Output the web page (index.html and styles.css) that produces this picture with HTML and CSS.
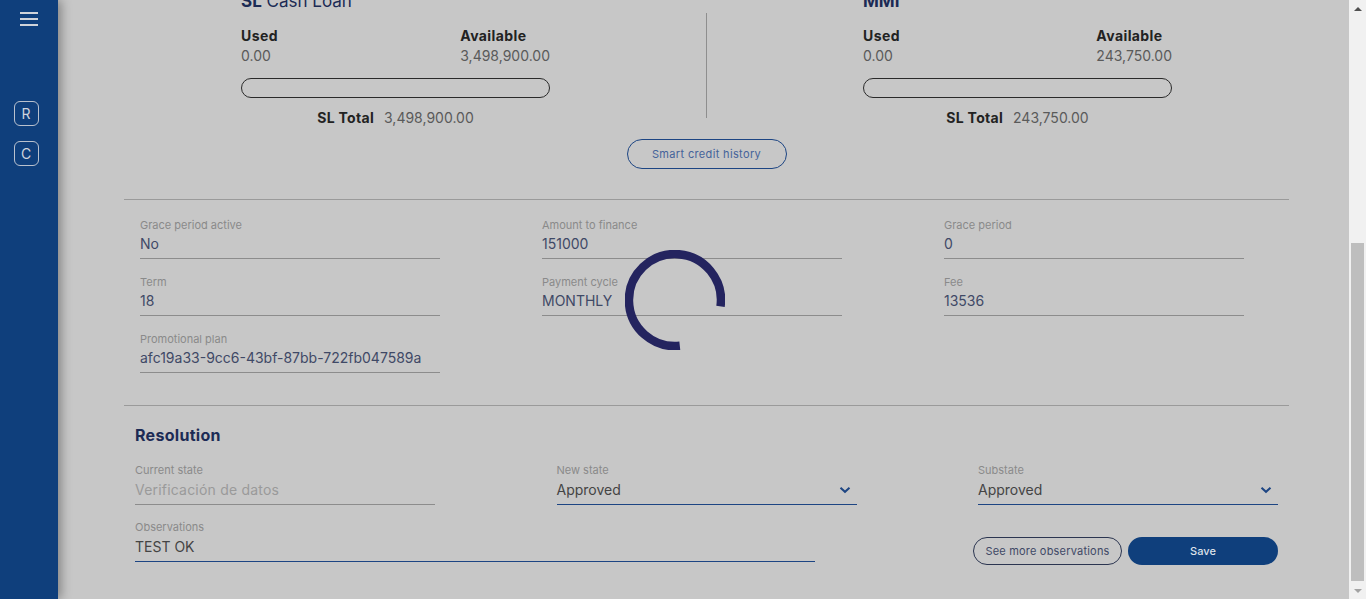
FILE: index.html
```html
<!DOCTYPE html>
<html lang="en">
<head>
<meta charset="utf-8">
<title>Credit request</title>
<link rel="stylesheet" href="styles.css">
</head>
<body>
<div class="app">
  <aside class="sidebar">
    <button class="menu-btn" aria-label="Menu"><span></span><span></span><span></span></button>
    <nav class="side-nav">
      <a class="side-item">R</a>
      <a class="side-item">C</a>
    </nav>
  </aside>
  <main class="scroller">
    <div class="page">
      <section class="summary-top"></section>

      <section class="credit-lines">
        <div class="line-card">
          <h3 class="line-title"><b>SL</b> Cash Loan</h3>
          <div class="line-stats">
            <div class="stat"><span class="stat-label">Used</span><span class="stat-value">0.00</span></div>
            <div class="stat"><span class="stat-label">Available</span><span class="stat-value">3,498,900.00</span></div>
          </div>
          <div class="progress"></div>
          <div class="line-total"><b>SL Total</b><span>3,498,900.00</span></div>
        </div>
        <div class="v-divider"></div>
        <div class="line-card">
          <h3 class="line-title"><b>MMI</b></h3>
          <div class="line-stats">
            <div class="stat"><span class="stat-label">Used</span><span class="stat-value">0.00</span></div>
            <div class="stat"><span class="stat-label">Available</span><span class="stat-value">243,750.00</span></div>
          </div>
          <div class="progress"></div>
          <div class="line-total"><b>SL Total</b><span>243,750.00</span></div>
        </div>
      </section>

      <div class="history-row">
        <button class="btn-outline-blue">Smart credit history</button>
      </div>

      <hr class="rule">

      <section class="fields-grid">
        <div class="field"><span class="field-label">Grace period active</span><span class="field-value">No</span></div>
        <div class="field"><span class="field-label">Amount to finance</span><span class="field-value">151000</span></div>
        <div class="field"><span class="field-label">Grace period</span><span class="field-value">0</span></div>
        <div class="field"><span class="field-label">Term</span><span class="field-value">18</span></div>
        <div class="field"><span class="field-label">Payment cycle</span><span class="field-value">MONTHLY</span></div>
        <div class="field"><span class="field-label">Fee</span><span class="field-value">13536</span></div>
        <div class="field"><span class="field-label">Promotional plan</span><span class="field-value">afc19a33-9cc6-43bf-87bb-722fb047589a</span></div>
      </section>

      <hr class="rule rule-bottom">

      <section class="resolution">
        <h2 class="resolution-title">Resolution</h2>
        <div class="resolution-row">
          <div class="field"><span class="field-label">Current state</span><span class="field-value disabled">Verificación de datos</span></div>
          <div class="field select"><span class="field-label">New state</span><span class="field-value">Approved<svg class="chev" viewBox="0 0 12 8" width="12" height="8"><path d="M1.5 1.8 6 5.8 10.5 1.8" fill="none" stroke="#1d4583" stroke-width="2"/></svg></span></div>
          <div class="field select"><span class="field-label">Substate</span><span class="field-value">Approved<svg class="chev" viewBox="0 0 12 8" width="12" height="8"><path d="M1.5 1.8 6 5.8 10.5 1.8" fill="none" stroke="#1d4583" stroke-width="2"/></svg></span></div>
        </div>
        <div class="resolution-row second">
          <div class="field obs"><span class="field-label">Observations</span><span class="field-value">TEST OK</span></div>
          <div class="actions">
            <button class="btn-outline">See more observations</button>
            <button class="btn-primary">Save</button>
          </div>
        </div>
      </section>
    </div>
  </main>
  <div class="scrollbar" aria-hidden="true">
    <span class="sb-arrow up"></span>
    <div class="sb-track"><span class="sb-thumb"></span></div>
    <span class="sb-arrow down"></span>
  </div>
  <div class="spinner" role="progressbar" aria-label="Loading">
    <svg viewBox="0 0 100 100" width="100" height="100"><path d="M95.5 56.4 A46 46 0 1 0 54.8 95.8" fill="none" stroke="#24245f" stroke-width="8.5"/></svg>
  </div>
</div>
</body>
</html>
```

FILE: styles.css
```css
* { box-sizing: border-box; }
html, body { margin: 0; height: 100%; overflow: hidden; }
body {
  font-family: "Inter", "Open Sans", sans-serif;
  background: #c7c7c7;
  color: #3f4966;
}
.app { display: flex; height: 100%; position: relative; }

.sidebar {
  width: 58px;
  flex: 0 0 58px;
  background: #0f3f7c;
  box-shadow: 3px 0 10px rgba(0,0,0,0.35);
  position: relative;
  z-index: 2;
  display: flex;
  flex-direction: column;
  align-items: center;
}
.menu-btn {
  margin-top: 12px;
  width: 18px;
  height: 14px;
  padding: 0;
  border: 0;
  background: none;
  display: flex;
  flex-direction: column;
  justify-content: space-between;
}
.menu-btn span { display: block; height: 2px; width: 18px; background: #cfd3da; }
.side-nav { margin-top: 75px; display: flex; flex-direction: column; gap: 15px; margin-left: -6px; }
.side-item {
  width: 25px; height: 25px;
  border: 1px solid #b9c1ce;
  border-radius: 6px;
  color: #cfd4dc;
  font-size: 14px;
  display: flex; align-items: center; justify-content: center;
}

.scroller {
  flex: 1;
  height: 100%;
  overflow-y: scroll;
  scrollbar-width: none;
  display: flex;
  flex-direction: column-reverse;
}
.scroller::-webkit-scrollbar { display: none; }

.scrollbar {
  flex: 0 0 17px;
  width: 17px;
  height: 100%;
  background: #f1f1f1;
  display: flex;
  flex-direction: column;
}
.sb-arrow { flex: 0 0 17px; display: flex; align-items: center; justify-content: center; }
.sb-arrow::before { content: ""; width: 0; height: 0; border-left: 4px solid transparent; border-right: 4px solid transparent; }
.sb-arrow.up::before { border-bottom: 4px solid #505050; }
.sb-arrow.down::before { border-top: 4px solid #a3a3a3; }
.sb-track { flex: 1; display: flex; flex-direction: column; justify-content: flex-end; padding: 0 2px 1px; }
.sb-thumb { display: block; height: 338px; background: #bebebe; }

.page { padding: 0 0 34px 66px; margin-right: 60px; }
.summary-top { height: 400px; }

.credit-lines { display: flex; justify-content: center; gap: 156px; }
.line-card { width: 309px; }
.line-title { margin: 0; font-size: 17px; line-height: 20px; font-weight: 400; color: #1c2b55; }
.line-title b { font-weight: 700; }
.line-stats { display: flex; justify-content: space-between; margin-top: 15px; }
.stat { display: flex; flex-direction: column; }
.stat-label { font-size: 14px; line-height: 20px; font-weight: 700; color: #222; letter-spacing: 0.4px; }
.stat-value { font-size: 14px; line-height: 20px; color: #5a5a5a; }
.progress { margin-top: 12px; height: 20px; border: 1px solid #2a2a2a; border-radius: 10px; }
.line-total { margin-top: 10px; text-align: center; font-size: 14px; line-height: 20px; color: #5a5a5a; display: flex; justify-content: center; gap: 10px; }
.line-total b { color: #222; letter-spacing: 0.3px; }
.v-divider { width: 1px; background: #8e8e8e; margin-top: 22px; height: 105px; }

.history-row { display: flex; justify-content: center; margin-top: 11px; }
.btn-outline-blue {
  width: 160px; height: 30px;
  border: 1px solid #1d4583;
  border-radius: 15px;
  background: transparent;
  font: 11px "Inter", sans-serif;
  letter-spacing: 0.35px;
  color: #45639a;
}

.rule { border: 0; border-top: 1px solid #9a9a9a; margin: 30px 0 0; }
.rule-bottom { margin-top: 32px; }

.fields-grid {
  display: grid;
  grid-template-columns: repeat(3, 300px);
  column-gap: 102px;
  row-gap: 16px;
  padding: 18px 16px 0;
}
.field { display: flex; flex-direction: column; width: 300px; }
.field-label { font-size: 11px; line-height: 14px; color: #8a8a8a; }
.field-value {
  margin-top: 2px;
  font-size: 14px; line-height: 20px;
  padding-bottom: 4px;
  border-bottom: 1px solid #8c8c8c;
  color: #3f4966;
  display: flex; align-items: center; justify-content: space-between;
}
.resolution .field-value { margin-top: 3px; }
.field-value.disabled { color: #9a9a9a; letter-spacing: 0.2px; }
.select .field-value { color: #444; border-bottom-color: #1d4583; }
.chev { margin-right: 6px; }

.resolution { padding: 18px 11px 0; }
.resolution-title { margin: 0; font-size: 16px; line-height: 22px; font-weight: 700; color: #1c2b55; letter-spacing: 0.3px; }
.resolution-row { display: flex; justify-content: space-between; margin-top: 17px; }
.resolution-row.second { margin-top: 15px; }
.obs { width: 680px; }
.obs .field-value { color: #444; border-bottom-color: #1d4583; }
.actions { display: flex; gap: 6px; margin-top: 17px; }
.btn-outline {
  width: 149px; height: 28px;
  border: 1px solid #2b3550;
  border-radius: 14px;
  background: transparent;
  font: 11px "Inter", sans-serif;
  letter-spacing: 0.2px;
  color: #3f4966;
}
.btn-primary {
  width: 150px; height: 28px;
  border: 0;
  border-radius: 14px;
  background: #0f3f7c;
  font: 500 11px "Inter", sans-serif;
  color: #dde2ea;
}

.spinner { position: absolute; left: 625px; top: 250px; width: 100px; height: 100px; z-index: 3; }
.spinner svg { display: block; }
```
